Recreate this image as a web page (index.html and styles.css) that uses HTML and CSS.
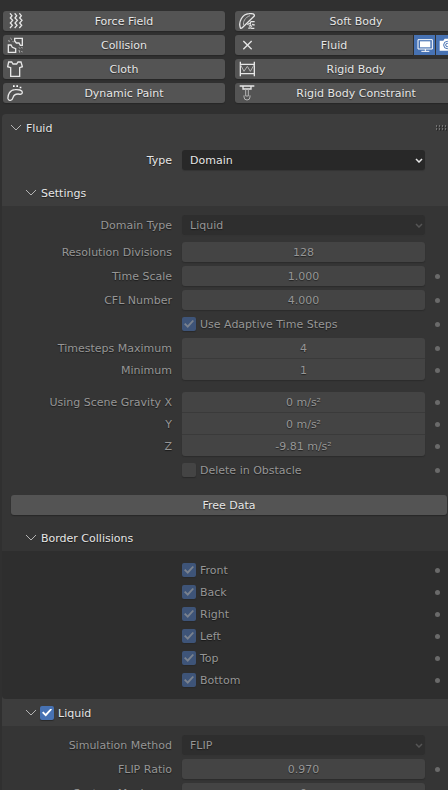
FILE: index.html
```html
<!DOCTYPE html>
<html lang="en">
<head>
<meta charset="utf-8">
<title>Physics Properties</title>
<link rel="stylesheet" href="styles.css">
</head>
<body>
<main class="editor">
  <div class="physics">
    <button class="btn" type="button">
      <svg class="icon" viewBox="0 0 48 48"><path d="M9 1L15 8L10 15L17 22L10 30L16 37L9 45M23 1L29 8L24 15L31 22L24 30L30 37L23 45M37 1L43 8L38 15L45 22L38 30L44 37L37 45"/></svg>
      <span>Force Field</span>
    </button>
    <button class="btn" type="button">
      <svg class="icon" viewBox="0 0 48 48"><path d="M4 44C-2 28 9 3 30 2C41 1 47 3 46 9L9 45Q5 47 4 44M47 26H37Q33 27 34 33Q28 30 26 36M30 40Q36 35 38 41M40 33Q43 37 47 35M28 46Q34 43 38 46H46"/><path class="faint" d="M14 37C11 27 18 13 33 8"/></svg>
      <span>Soft Body</span>
    </button>
    <button class="btn" type="button">
      <svg class="icon" viewBox="0 0 48 48"><path d="M23 4H46V25H40L36 18H28L23 12ZM4 24H12L16 31L26 35V46H4Z"/><path class="faint" d="M10 3L15 8M3 11L9 13M17 12L20 16M36 31L39 35M43 31L47 33M36 39L38 47M43 42L47 46"/></svg>
      <span>Collision</span>
    </button>
    <div class="joined">
      <button class="btn" type="button">
        <svg class="icon" viewBox="0 0 48 48"><path d="M13 12L38 37M38 12L13 37"/></svg>
        <span>Fluid</span>
      </button>
      <button class="toggle" type="button" aria-label="Show in viewport">
        <svg class="icon" viewBox="0 0 48 48"><path d="M3 8H46V36H3ZM13 43H37M25 36V43"/><path class="solid" d="M9 13H40V31H9Z"/></svg>
      </button>
      <button class="toggle" type="button" aria-label="Show in renders">
        <svg class="icon" viewBox="0 0 48 48"><path class="solid" d="M2 11H13L17 5H32L36 11H47V41H2Z"/><circle class="lens" cx="25" cy="24" r="11"/><circle class="lens" cx="25" cy="24" r="5"/></svg>
      </button>
    </div>
    <button class="btn" type="button">
      <svg class="icon" viewBox="0 0 48 48"><path d="M5 3H14L18 9H29L33 3H42L46 17L38 20V46H11V20L2 17Z"/></svg>
      <span>Cloth</span>
    </button>
    <button class="btn" type="button">
      <svg class="icon" viewBox="0 0 48 48"><path d="M4 2V46M46 2V46M4 10H46M4 38H46"/><path class="faint" d="M5 12L15 31L25 16L34 31L45 12"/></svg>
      <span>Rigid Body</span>
    </button>
    <button class="btn" type="button">
      <svg class="icon" viewBox="0 0 48 48"><path d="M3 41C2 30 8 15 24 14C34 13 46 15 46 22C46 29 40 28 33 27C24 27 20 31 18 38C16 47 5 49 3 41Z"/><path class="solid" d="M18 1H23V6H18ZM28 1H33V6H28ZM38 5H43V10H38Z"/></svg>
      <span>Dynamic Paint</span>
    </button>
    <button class="btn" type="button">
      <svg class="icon" viewBox="0 0 48 48"><path d="M2 3H46M12 3V12H36V3"/><path class="faint" d="M20 12V33H28V12M15 31V36A9 9 0 0 0 33 36V31"/></svg>
      <span>Rigid Body Constraint</span>
    </button>
  </div>

  <section class="panel">
    <h2 class="head">
      <button class="fold" type="button"><svg class="chevron" viewBox="0 0 10 6"><path d="M0 0L5 5L10 0"/></svg><span>Fluid</span></button>
      <svg class="grip" viewBox="0 0 12 6"><path class="grip-shade" d="M1 2H12M1 5H12"/><path class="grip-dots" d="M0 1H12M0 4H12"/></svg>
    </h2>
    <div class="rows top-rows">
      <div class="row">
        <label for="type">Type</label>
        <div class="select"><select id="type"><option>Domain</option></select><svg class="arrow" viewBox="0 0 8 5"><path d="M1 1L4 4L7 1"/></svg></div>
      </div>
    </div>

    <h3 class="head sub"><button class="fold" type="button"><svg class="chevron" viewBox="0 0 10 6"><path d="M0 0L5 5L10 0"/></svg><span>Settings</span></button></h3>
    <div class="body">
      <div class="rows">
        <div class="row off spaced">
          <label for="domain">Domain Type</label>
          <div class="select"><select id="domain" disabled><option>Liquid</option></select><svg class="arrow" viewBox="0 0 8 5"><path d="M1 1L4 4L7 1"/></svg></div>
        </div>
        <div class="row off"><label for="res">Resolution Divisions</label><input class="num" id="res" value="128" disabled></div>
        <div class="row off"><label for="time">Time Scale</label><input class="num" id="time" value="1.000" disabled><i class="dot"></i></div>
        <div class="row off"><label for="cfl">CFL Number</label><input class="num" id="cfl" value="4.000" disabled><i class="dot"></i></div>
        <div class="row off"><label class="check"><input type="checkbox" checked disabled><span>Use Adaptive Time Steps</span></label><i class="dot"></i></div>
        <div class="group">
          <div class="row off"><label for="tmax">Timesteps Maximum</label><input class="num" id="tmax" value="4" disabled><i class="dot"></i></div>
          <div class="row off"><label for="tmin">Minimum</label><input class="num" id="tmin" value="1" disabled><i class="dot"></i></div>
        </div>
        <div class="group apart">
          <div class="row off"><label for="gx">Using Scene Gravity X</label><input class="num" id="gx" value="0 m/s²" disabled><i class="dot"></i></div>
          <div class="row off"><label for="gy">Y</label><input class="num" id="gy" value="0 m/s²" disabled><i class="dot"></i></div>
          <div class="row off"><label for="gz">Z</label><input class="num" id="gz" value="-9.81 m/s²" disabled><i class="dot"></i></div>
        </div>
        <div class="row off"><label class="check"><input type="checkbox" disabled><span>Delete in Obstacle</span></label><i class="dot"></i></div>
      </div>
      <button class="btn wide" type="button"><span>Free Data</span></button>
      <h3 class="head sub"><button class="fold" type="button"><svg class="chevron" viewBox="0 0 10 6"><path d="M0 0L5 5L10 0"/></svg><span>Border Collisions</span></button></h3>
    </div>

    <div class="body deep">
      <div class="rows tight">
        <div class="row off"><label class="check"><input type="checkbox" checked disabled><span>Front</span></label><i class="dot"></i></div>
        <div class="row off"><label class="check"><input type="checkbox" checked disabled><span>Back</span></label><i class="dot"></i></div>
        <div class="row off"><label class="check"><input type="checkbox" checked disabled><span>Right</span></label><i class="dot"></i></div>
        <div class="row off"><label class="check"><input type="checkbox" checked disabled><span>Left</span></label><i class="dot"></i></div>
        <div class="row off"><label class="check"><input type="checkbox" checked disabled><span>Top</span></label><i class="dot"></i></div>
        <div class="row off"><label class="check"><input type="checkbox" checked disabled><span>Bottom</span></label><i class="dot"></i></div>
      </div>
    </div>

    <h3 class="head sub liquid">
      <button class="fold" type="button" aria-label="Collapse"><svg class="chevron" viewBox="0 0 10 6"><path d="M0 0L5 5L10 0"/></svg></button>
      <label class="check"><input type="checkbox" checked><span>Liquid</span></label>
    </h3>
    <div class="body">
      <div class="rows">
        <div class="row off">
          <label for="method">Simulation Method</label>
          <div class="select"><select id="method" disabled><option>FLIP</option></select><svg class="arrow" viewBox="0 0 8 5"><path d="M1 1L4 4L7 1"/></svg></div>
        </div>
        <div class="row off"><label for="ratio">FLIP Ratio</label><input class="num" id="ratio" value="0.970" disabled><i class="dot"></i></div>
        <div class="row off"><label for="sysmax">System Maximum</label><input class="num" id="sysmax" value="0" disabled><i class="dot"></i></div>
      </div>
    </div>
  </section>
</main>
</body>
</html>
```
FILE: styles.css
```css
* { box-sizing: border-box; }

body {
  margin: 0;
  background: #303030;
  color: #e6e6e6;
  font: 11px/20px "DejaVu Sans", sans-serif;
  text-shadow: 0 1px 1px rgba(0, 0, 0, 0.5);
}

button, input, select {
  margin: 0;
  padding: 0;
  border: 0;
  color: inherit;
  font: inherit;
  text-shadow: inherit;
}

h2, h3 { margin: 0; font: inherit; }

.editor {
  height: 100vh;
  overflow: hidden;
}

/* Physics type buttons; the second column runs past the editor edge */
.physics {
  display: grid;
  grid-template-columns: 1fr 1fr;
  gap: 4px 10px;
  margin: 0 -9px 0 3px;
  padding: 11px 0;
}

.btn {
  display: flex;
  align-items: center;
  height: 20px;
  padding: 0 0 0 4px;
  border-radius: 3px;
  background: #545454;
  box-shadow: 0 1px 1px #272727;
}

.btn span { flex: 1; text-align: center; }

/* Optical centring of the text in its row */
.btn span, .fold span, .check span, .row > label[for] { padding-top: 2px; }

.icon {
  flex: none;
  width: 16px;
  height: 16px;
  fill: none;
  stroke: #e6e6e6;
  stroke-width: 4;
}

.icon .solid { fill: #fff; stroke: none; }
.icon .lens { stroke: #4772b3; }
.icon .faint { stroke: #b4b4b4; stroke-width: 3; }

.joined { display: flex; gap: 1px; }
.joined .btn { flex: 1; border-radius: 3px 0 0 3px; }

.toggle {
  display: flex;
  align-items: center;
  justify-content: center;
  width: 21px;
  height: 20px;
  background: #4772b3;
}

.toggle .icon { stroke: #fff; stroke-width: 3; }

.panel {
  margin-left: 2px;
  border-radius: 4px 0 0 0;
  background: #3d3d3d;
}

.head {
  display: flex;
  align-items: center;
  justify-content: space-between;
  height: 27px;
  padding-left: 9px;
}

.head.sub { height: 26px; padding-left: 24px; }
.head.liquid { height: 27px; justify-content: flex-start; gap: 4px; }

.fold {
  display: flex;
  align-items: center;
  gap: 5px;
  background: none;
}

.chevron {
  width: 10px;
  height: 6px;
  fill: none;
  stroke: #b4b4b4;
}

.grip { width: 12px; height: 6px; }
.grip path { stroke-dasharray: 1 2; }
.grip-dots { stroke: #a8a8a8; }
.grip-shade { stroke: #181818; }

.rows {
  display: flex;
  flex-direction: column;
  gap: 4px;
}

.rows.tight { gap: 2px; }
.top-rows { padding: 9px 0 10px; }

.row {
  display: grid;
  grid-template-columns: minmax(0, 2fr) 10px minmax(0, 3fr) 22px;
  grid-template-rows: 20px;
  align-items: center;
  height: 20px;
  padding: 0 1px 0 8px;
}

.row > label { grid-column: 1; text-align: right; white-space: nowrap; }
.row > .num, .row > .select, .row > .check { grid-column: 3; }
.row > .check { text-align: left; }
.row.off { color: #969696; }
.row.spaced { margin-bottom: 3px; }

.num {
  width: 100%;
  height: 20px;
  padding-top: 1px;
  border-radius: 3px;
  background: #444;
  box-shadow: 0 1px 1px #2c2c2c;
  text-align: center;
}

/* Stacked fields share one rounded block with hairline separators */
.group {
  display: flex;
  flex-direction: column;
  gap: 2px;
}

.group.apart { margin-top: 8px; }
.group .num { border-radius: 0; }
.group .row:first-child .num { border-radius: 3px 3px 0 0; }
.group .row:last-child .num { border-radius: 0 0 3px 3px; }
.group .row:not(:last-child) .num { box-shadow: 0 1px #3a3a3a, 0 2px #444; }

.select { position: relative; }

.select select {
  display: block;
  width: 100%;
  height: 20px;
  padding: 1px 0 0 8px;
  border-radius: 3px;
  background: #282828;
  box-shadow: 0 1px 1px #343434;
  appearance: none;
  opacity: 1;
}

.select select:disabled { background: #2e2e2e; }

.arrow {
  position: absolute;
  top: 8px;
  right: 2px;
  width: 8px;
  height: 5px;
  fill: none;
  stroke: #e6e6e6;
  stroke-width: 1.5;
  pointer-events: none;
}

.off .arrow { stroke: #555; }

.check {
  display: flex;
  align-items: center;
  gap: 4px;
  white-space: nowrap;
}

.check input {
  display: grid;
  place-items: center;
  flex: none;
  width: 14px;
  height: 14px;
  border-radius: 2px;
  background: #444;
  box-shadow: 0 1px 1px #292929;
  appearance: none;
}

.check input:checked { background: #4772b3; }
.check input:checked:disabled { background: #3e5478; }

.check input:checked::after {
  content: "";
  width: 10px;
  height: 8px;
  background: #fff;
  clip-path: polygon(0 52%, 14% 38%, 36% 66%, 86% 0, 100% 14%, 38% 100%);
}

.check input:checked:disabled::after { background: #7a828e; }

.dot {
  grid-column: 4;
  justify-self: center;
  width: 5px;
  height: 5px;
  margin-left: 2px;
  border-radius: 50%;
  background: #6a6a6a;
}

.body { padding-top: 9px; background: #353535; }

.body.deep {
  padding-bottom: 9px;
  border-radius: 0 0 0 4px;
  background: #2e2e2e;
}

.btn.wide {
  justify-content: center;
  width: calc(100% - 10px);
  margin: 15px 1px 10px 9px;
  padding: 0;
}
```
